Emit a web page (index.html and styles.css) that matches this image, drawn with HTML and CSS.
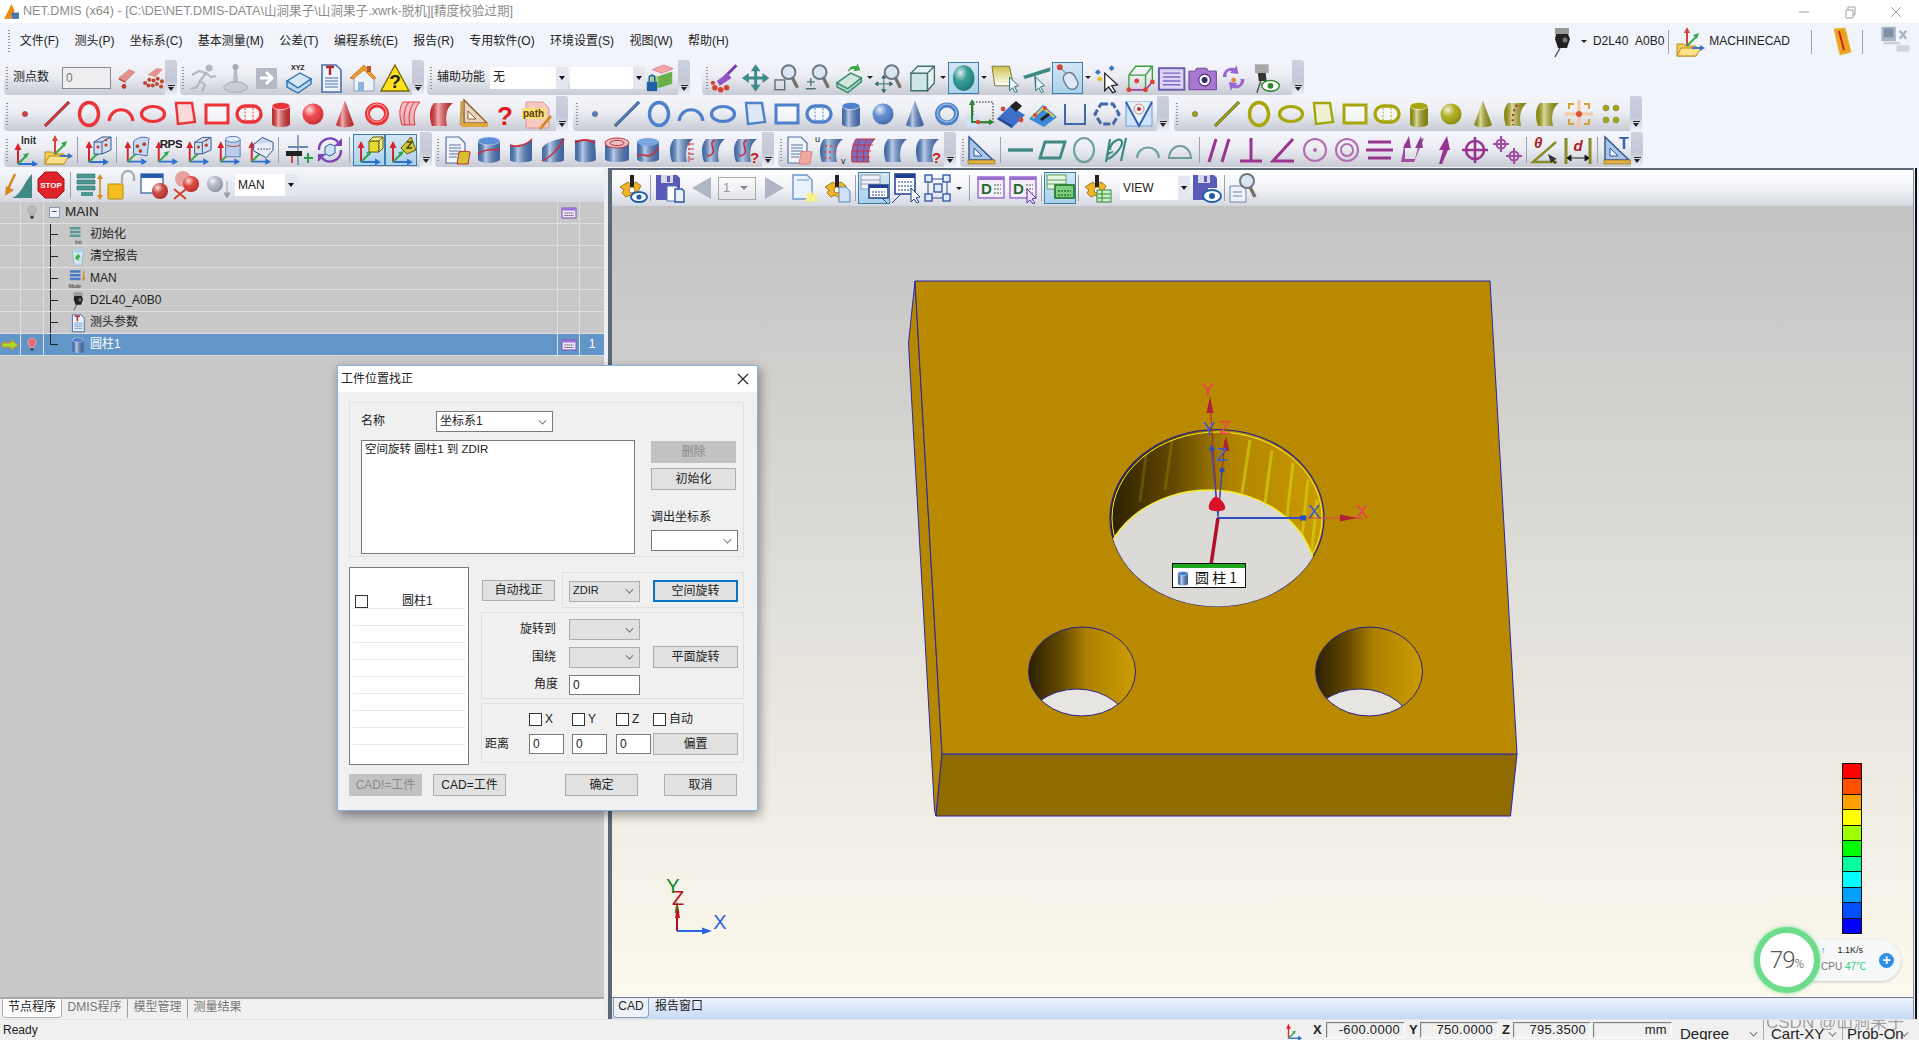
FILE: index.html
```html
<!DOCTYPE html>
<html lang="zh-CN">
<head>
<meta charset="utf-8">
<title>NET.DMIS</title>
<link rel="stylesheet" href="styles.css">
</head>
<body>
<svg class="defs" aria-hidden="true">
<defs>
<radialGradient id="gBall" cx=".35" cy=".3" r=".75"><stop offset="0" stop-color="#fff" stop-opacity=".85"/><stop offset=".45" stop-color="#fff" stop-opacity=".1"/><stop offset="1" stop-color="#000" stop-opacity=".2"/></radialGradient>
<linearGradient id="gCyl"><stop offset="0" stop-color="#000" stop-opacity=".15"/><stop offset=".35" stop-color="#fff" stop-opacity=".6"/><stop offset="1" stop-color="#000" stop-opacity=".2"/></linearGradient>
<linearGradient id="gWall"><stop offset="0" stop-color="#2c2000"/><stop offset=".3" stop-color="#634800"/><stop offset=".55" stop-color="#ad8200"/><stop offset="1" stop-color="#cc9c00"/></linearGradient>
<linearGradient id="gPage" x2="0" y2="1"><stop offset="0" stop-color="#cfc24a"/><stop offset="1" stop-color="#fff"/></linearGradient>
</defs>
<symbol id="point" viewBox="0 0 32 32"><circle cx="16" cy="16" r="2.6" fill="currentColor" stroke="#555" stroke-width=".6"/></symbol>
<symbol id="line" viewBox="0 0 32 32"><path d="M4 28 28 4" stroke="#333" stroke-width="3"/><path d="M4 28 28 4" stroke="currentColor" stroke-width="2"/></symbol>
<symbol id="circle" viewBox="0 0 32 32"><ellipse cx="16" cy="16" rx="9.5" ry="11.5" fill="none" stroke="currentColor" stroke-width="3.4"/></symbol>
<symbol id="arc" viewBox="0 0 32 32"><path d="M4 23C6 8 26 8 28 23" fill="none" stroke="currentColor" stroke-width="3.2"/></symbol>
<symbol id="ellipse" viewBox="0 0 32 32"><ellipse cx="16" cy="16" rx="11.5" ry="7.5" fill="none" stroke="currentColor" stroke-width="3.2"/></symbol>
<symbol id="plane" viewBox="0 0 32 32"><path d="M7 5h16l3 19-17 2z" fill="#fff" stroke="currentColor" stroke-width="2.4"/><path d="M7 5h16l3 19-17 2z" fill="currentColor" fill-opacity=".18"/></symbol>
<symbol id="rect" viewBox="0 0 32 32"><rect x="5" y="7" width="22" height="18" fill="#fff" fill-opacity=".6" stroke="currentColor" stroke-width="3"/></symbol>
<symbol id="slot" viewBox="0 0 32 32"><rect x="4" y="8" width="24" height="16" rx="8" fill="#fff" fill-opacity=".6" stroke="currentColor" stroke-width="3.4"/><path d="M12 10v12M20 10v12" stroke="currentColor" stroke-dasharray="2 1.5"/></symbol>
<symbol id="cyl" viewBox="0 0 32 32"><path d="M7 8v18c0 4 18 4 18 0V8z" fill="currentColor"/><path d="M7 8v18c0 4 18 4 18 0V8z" fill="url(#gCyl)"/><ellipse cx="16" cy="8" rx="9" ry="3.6" fill="currentColor" stroke="#fff" stroke-width=".6"/></symbol>
<symbol id="sphere" viewBox="0 0 32 32"><circle cx="16" cy="16" r="10.5" fill="currentColor"/><circle cx="16" cy="16" r="10.5" fill="url(#gBall)"/></symbol>
<symbol id="cone" viewBox="0 0 32 32"><path d="M16 3 7 27c4 3 14 3 18 0z" fill="currentColor"/><path d="M16 3 7 27c4 3 14 3 18 0z" fill="url(#gCyl)"/></symbol>
<symbol id="torus" viewBox="0 0 32 32"><ellipse cx="16" cy="16" rx="9.5" ry="9" fill="none" stroke="currentColor" stroke-width="5"/><ellipse cx="16" cy="15" rx="9.5" ry="9" fill="none" stroke="#fff" stroke-opacity=".6"/></symbol>
<symbol id="surfl" viewBox="0 0 32 32"><path d="M10 4h17c-6 6-7 15-5 23H9C6 18 6 10 10 4z" fill="currentColor" fill-opacity=".25" stroke="currentColor"/><path d="M16 4c-5 6-6 16-4 23M22 4c-6 6-7 16-5 23" fill="none" stroke="currentColor"/></symbol>
<symbol id="surf" viewBox="0 0 32 32"><path d="M9 5h19c-7 5-8 14-6 23H7C4 19 4 11 9 5z" fill="currentColor"/><path d="M9 5h19c-7 5-8 14-6 23H7C4 19 4 11 9 5z" fill="url(#gCyl)"/></symbol>
<symbol id="surfdot" viewBox="0 0 32 32"><use href="#surf"/><path d="M18 7c-4 5-5 14-4 20" fill="none" stroke="#b02020" stroke-dasharray="2 3" stroke-width="2"/></symbol>
<symbol id="mag" viewBox="0 0 32 32"><circle cx="17" cy="10" r="7" fill="#dbe6f2" stroke="#6d7683" stroke-width="2"/><path d="M21 16l5 10" stroke="#77716a" stroke-width="3.4"/></symbol>
<symbol id="axes" viewBox="0 0 32 32"><path d="M8 28V12" stroke="#d8232a" stroke-width="2"/><path d="M8 7l-3.5 7h7z" fill="#d8232a"/><path d="M8 28h15" stroke="#2f6fd0" stroke-width="2"/><path d="M28 28l-6-3.5v7z" fill="#2f6fd0"/><path d="M8 28l8-8" stroke="#2ea84a" stroke-width="2"/><path d="M19 17l-6 1.5 3.5 3.5z" fill="#2ea84a"/></symbol>
<symbol id="eraser" viewBox="0 0 32 32"><path d="M7 16 19 6l7 3-11 11z" fill="#e48f90" stroke="#985" stroke-width=".6"/><path d="M7 16l8 4v2l-8-4z" fill="#b44"/><circle cx="13" cy="26" r="2.8" fill="#c3352c"/></symbol>
<symbol id="eraser2" viewBox="0 0 32 32"><path d="M9 12 20 4l7 2-9 9z" fill="#e48f90"/><g fill="#bd4a30"><circle cx="6" cy="22" r="2.4"/><circle cx="11" cy="18" r="2.4"/><circle cx="16" cy="19" r="2.4"/><circle cx="21" cy="17" r="2.4"/><circle cx="26" cy="20" r="2.4"/><circle cx="10" cy="25" r="2.4"/><circle cx="15" cy="25" r="2.4"/><circle cx="20" cy="23" r="2.4"/><circle cx="25" cy="26" r="2.4"/></g></symbol>
<symbol id="runner" viewBox="0 0 32 32"><g fill="none" stroke="#b4b8c0" stroke-width="2.2"><circle cx="22" cy="6" r="2.4" fill="#b4b8c0"/><path d="M5 13 12 9l7 2-6 8 5 4-3 7M13 19l-3 6-7 2M19 11l5 4 5-1"/></g></symbol>
<symbol id="joy" viewBox="0 0 32 32"><path d="M15 6h3l1 15h-5z" fill="#b6bac2"/><circle cx="16.500" cy="5" r="3" fill="#a5a9b1"/><path d="M5 24l6-4h11l6 4v3l-6 3H11l-6-3z" fill="#c8ccd4" stroke="#a6aab2"/></symbol>
<symbol id="arrowbox" viewBox="0 0 32 32"><rect x="5" y="6" width="21" height="21" rx="1" fill="#b4b9c4"/><path d="M9 16h11m-5-6 6 6-6 6" fill="none" stroke="#fff" stroke-width="3"/></symbol>
<symbol id="xyzb" viewBox="0 0 32 32"><path d="M4 19 17 11l11 6-13 9z" fill="#d6e8f6" stroke="#2f72b0" stroke-width="1.4"/><path d="M4 19v6l11 6 13-9v-5l-13 9z" fill="#bcd9ee" stroke="#2f72b0" stroke-width="1.4"/></symbol>
<symbol id="doct" viewBox="0 0 32 32"><path d="M7 3h14l5 5v22H7z" fill="#eef3fa" stroke="#4a6fae" stroke-width="1.6"/><path d="M11 5h8M15 5v8" stroke="#b02a2a" stroke-width="2.4"/><path d="M10 16h13M10 19h13M10 22h13M10 25h13" stroke="#4a6fae"/></symbol>
<symbol id="home" viewBox="0 0 32 32"><path d="M7 15v14h20V15L17 6z" fill="#eef3fb" stroke="#8aa0c0"/><path d="M3 16 17 3l12 13-3 1-9-9-11 9z" fill="#ef9b2e" stroke="#b66a10" stroke-width=".7"/><rect x="20" y="4" width="4" height="6" fill="#b3582c"/><rect x="11" y="20" width="6" height="9" fill="#8fb2de"/></symbol>
<symbol id="warnb" viewBox="0 0 32 32"><path d="M16 3 30 29H2z" fill="#ffe01e" stroke="#776b00" stroke-width="1.4"/></symbol>
<symbol id="lockbox" viewBox="0 0 32 32"><path d="M8 7 20 2l10 4-12 5z" fill="#f3a8a0" stroke="#c06"  stroke-width=".4"/><path d="M14 14l15-5v13l-15 5z" fill="#6ab04a"/><path d="M6 13v10l8 4V14z" fill="#9ad07a"/><rect x="2" y="20" width="11" height="10" fill="#1f5fa8"/><path d="M4.500 20v-4a3 3 0 0 1 6 0v4" fill="none" stroke="#1f5fa8" stroke-width="1.6"/></symbol>
<symbol id="broom" viewBox="0 0 32 32"><path d="M28 3 15 16" stroke="#7a3ab0" stroke-width="3"/><path d="M19 11 8 19l3 5 12-8z" fill="#9454c8"/><g fill="#d6422e"><circle cx="6" cy="26" r="2.800"/><circle cx="12" cy="28" r="2.800"/><circle cx="18" cy="26" r="2.800"/><circle cx="4" cy="21" r="2.200"/></g></symbol>
<symbol id="move" viewBox="0 0 32 32"><g fill="#3e8b8b"><path d="M16 2l-5 7h10zM16 30l-5-7h10zM2 16l7-5v10zM30 16l-7-5v10z"/><rect x="14.500" y="8" width="3" height="16"/><rect x="8" y="14.500" width="16" height="3"/></g></symbol>
<symbol id="zoombox" viewBox="0 0 32 32"><use href="#mag"/><rect x="3" y="18" width="10" height="10" fill="none" stroke="#5b7070" stroke-width="1.400"/></symbol>
<symbol id="zoompm" viewBox="0 0 32 32"><use href="#mag"/><path d="M8 16v8M4 20h8M3 27h10" stroke="#4e7070" stroke-width="1.400"/></symbol>
<symbol id="zoommv" viewBox="0 0 32 32"><use href="#mag"/><path d="M9 15v14M2 22h14M9 13l-2 3h4zM9 31l-2-3h4zM0 22l3-2v4zM18 22l-3-2v4z" fill="#3b6c6c" stroke="#3b6c6c"/></symbol>
<symbol id="boxrot" viewBox="0 0 32 32"><path d="M3 21 17 11l11 5-14 11z" fill="#cfe8df" stroke="#3a8a6a" stroke-width="1.400"/><path d="M3 21v4l11 6 14-11v-4l-14 11z" fill="#a8d4c4" stroke="#3a8a6a" stroke-width="1.400"/><path d="M14 10c1-5 5-7 9-6l1-3 3 7-7 1 1-2c-3-1-5 1-7 3z" fill="#3fa83f"/></symbol>
<symbol id="cube" viewBox="0 0 32 32"><path d="M4 11h17v18H4z" fill="#cde5e3" stroke="#3f6f6f" stroke-width="1.400"/><path d="M4 11l7-7h17v17l-7 8V11zM21 11l7-7" fill="#e4f2f1" stroke="#3f6f6f" stroke-width="1.400"/></symbol>
<symbol id="tsphere" viewBox="0 0 32 32"><ellipse cx="16" cy="16" rx="11" ry="13" fill="#1f8f88"/><ellipse cx="16" cy="16" rx="11" ry="13" fill="url(#gBall)"/></symbol>
<symbol id="ypage" viewBox="0 0 32 32"><path d="M3 4h18l4 20H6z" fill="url(#gPage)" stroke="#7a7a3a"/><path d="M21 15v14l3-3 3 5 2-1-3-5 4-1z" fill="#e8f4ff" stroke="#2f6f6f"/></symbol>
<symbol id="tcur" viewBox="0 0 32 32"><path d="M2 14 30 5v4L4 17z" fill="#3e8b84"/><path d="M14 13l1 12M15 15v14l3-3 3 5 2-1-3-5 4-1z" fill="#e8f4ff" stroke="#2f6f6f"/></symbol>
<symbol id="mouse" viewBox="0 0 32 32"><circle cx="8" cy="5" r="3" fill="#d8443a"/><path d="M8 5l8 8" stroke="#666"/><rect x="13" y="10" width="12" height="18" rx="6" transform="rotate(-30 19 19)" fill="#dfe8f4" stroke="#6a7d94" stroke-width="1.400"/></symbol>
<symbol id="star" viewBox="0 0 32 32"><path d="M12 11v18l4-4 4 6 3-1-4-6 6-1z" fill="#fff" stroke="#222" stroke-width="1.300"/><path d="M8 10l-3 3-3-3 3-3zM22 6l-3 3-3-3 3-3z" fill="#3f72c4"/><path d="M10 17l-3 3-3-3 3-3z" fill="#e8c028"/></symbol>
<symbol id="redcube" viewBox="0 0 32 32"><path d="M4 13h17v15H4zM4 13l7-9h17v16l-7 8M21 13l7-9" fill="none" stroke="#3aa03a" stroke-width="1.400"/><path d="M4 28h17l7-8" stroke="#b030b0" stroke-width="1.400" fill="none"/><g fill="#d8443a"><circle cx="4" cy="28" r="2.500"/><circle cx="21" cy="28" r="2.500"/><circle cx="28" cy="20" r="2.500"/><circle cx="12" cy="19" r="2.500"/></g></symbol>
<symbol id="listb" viewBox="0 0 32 32"><rect x="3" y="6" width="26" height="22" fill="#ded6f4" stroke="#6a5bb0" stroke-width="2"/><path d="M7 11h18M7 15h18M7 19h18M7 23h18" stroke="#7a6cc8" stroke-width="1.500"/></symbol>
<symbol id="camera" viewBox="0 0 32 32"><path d="M2 9h6l2-3h10l2 3h8v19H2z" fill="#a878d0" stroke="#6d3e98"/><circle cx="18" cy="18" r="6" fill="#f8f8ff" stroke="#4b3070" stroke-width="1.200"/><circle cx="18" cy="18" r="3" fill="#3a2a60"/></symbol>
<symbol id="swap" viewBox="0 0 32 32"><path d="M5 15C5 8 11 4 17 6l2-3 2 9-9-1 2-2C10 8 8 11 9 15z" fill="#9a66d8"/><path d="M27 17c0 7-6 11-12 9l-2 3-2-9 9 1-2 2c4 1 6-2 5-6z" fill="#9a66d8"/><path d="M13 18l3-3 3 3-3 3z" fill="#e08a3a"/></symbol>
<symbol id="probee" viewBox="0 0 32 32"><rect x="5" y="2" width="14" height="9" fill="#a8a8a8"/><path d="M8 11h8l1 8H9z" fill="#333"/><path d="M11 19 7 31" stroke="#555" stroke-width="1.500"/><ellipse cx="21" cy="24" rx="9" ry="5.500" fill="#fff" stroke="#2d8a2d" stroke-width="1.500"/><circle cx="21" cy="24" r="3" fill="#2d8a2d"/></symbol>
<symbol id="probe" viewBox="0 0 32 32"><rect x="9" y="2" width="14" height="6" fill="#999"/><path d="M10 8h12l2 5-3 9H12l-3-9z" fill="#222"/><circle cx="19" cy="14" r="2.500" fill="#777"/><path d="M14 22 9 31" stroke="#555" stroke-width="1.500"/></symbol>
<symbol id="ruler" viewBox="0 0 32 32"><path d="M7 2 7 25H30z" fill="#e9d6c0" stroke="#8b5a2a" stroke-width="1.400"/><path d="M11 13v8h8z" fill="#fff" stroke="#8b5a2a"/><rect x="4" y="25" width="27" height="4" fill="#e0a83a"/><path d="M5 3 4 27" stroke="#c9a24a" stroke-width="3"/></symbol>
<symbol id="frame" viewBox="0 0 32 32"><rect x="10" y="4" width="20" height="21" fill="none" stroke="#222" stroke-dasharray="1.500 1.500"/><rect x="3" y="17" width="12" height="12" fill="#cfe0f8"/><path d="M9 24V5" stroke="#2a8a2a" stroke-width="2"/><path d="M9 1 6 7h6z" fill="#2a8a2a"/><path d="M8 24h20" stroke="#2a8a2a" stroke-width="2"/><path d="M31 24l-5-3v6z" fill="#2a8a2a"/><circle cx="15" cy="24" r="2.200" fill="#d8443a"/></symbol>
<symbol id="tool1" viewBox="0 0 32 32"><path d="M2 21 15 8l15 9-13 13z" fill="#3d6fc8"/><path d="M2 21l15 9 0-3-12-7z" fill="#2a4a90"/><path d="M15 8l6-5 6 5-6 6z" fill="#222"/><circle cx="8" cy="11" r="2.400" fill="#d8443a"/><circle cx="26" cy="22" r="2.400" fill="#d8443a"/></symbol>
<symbol id="tool2" viewBox="0 0 32 32"><path d="M2 21 16 7l14 12-13 10z" fill="#3d88d8"/><path d="M6 20 16 10l11 9" fill="none" stroke="#f0d040" stroke-width="2"/><path d="M14 22l8-6" stroke="#222" stroke-width="3"/><circle cx="8" cy="17" r="2" fill="#d8443a"/><circle cx="18" cy="10" r="2" fill="#d8443a"/></symbol>
<symbol id="squ" viewBox="0 0 32 32"><path d="M6 6v20h20V6" fill="none" stroke="#3f68a8" stroke-width="2"/></symbol>
<symbol id="dcirc" viewBox="0 0 32 32"><path d="M10 6h12l6 10-6 10H10L4 16z" fill="none" stroke="#4468a8" stroke-width="3" stroke-dasharray="7 2.500"/></symbol>
<symbol id="vee" viewBox="0 0 32 32"><rect x="3" y="4" width="26" height="24" fill="#cfe4f8" stroke="#6ca0d8"/><path d="M3 4l13 24L29 4" fill="#e8f2fb" stroke="#2f5fb0" stroke-width="2"/><circle cx="16" cy="11" r="5" fill="#f0f0f0" stroke="#c88"/><circle cx="16" cy="11" r="2" fill="#c03030"/></symbol>
<symbol id="target" viewBox="0 0 32 32"><path d="M6 11V6h5M21 6h5v5M26 21v5h-5M11 26H6v-5" fill="none" stroke="#d8a030" stroke-width="2"/><path d="M16 2v28M2 16h28" stroke="#f4c8a0" stroke-width="3"/><circle cx="16" cy="16" r="3" fill="#e0503a"/></symbol>
<symbol id="dots4" viewBox="0 0 32 32"><g fill="#a7a60a" stroke="#667"  stroke-width=".4"><circle cx="11" cy="10" r="3"/><circle cx="21" cy="10" r="3"/><circle cx="11" cy="22" r="3"/><circle cx="21" cy="22" r="3"/></g></symbol>
<symbol id="fold" viewBox="0 0 32 32"><path d="M3 18h7l2 2h10v10H3z" fill="#f7cf58" stroke="#b58a20"/><path d="M3 30l4-8h20l-5 8z" fill="#fbe28a" stroke="#b58a20"/><path d="M13 20V6" stroke="#d8443a" stroke-width="2"/><path d="M13 1l-3 6h6z" fill="#d8443a"/><path d="M13 20l9-9" stroke="#3aa84a" stroke-width="2"/><path d="M25 7l-6 2 4 4z" fill="#3aa84a"/><path d="M18 22h9" stroke="#3f72c4" stroke-width="2"/><path d="M31 22l-5-3v6z" fill="#3f72c4"/></symbol>
<symbol id="axcube" viewBox="0 0 32 32"><use href="#axes"/><path d="M13 8 21 3h9v13l-9 4H13z" fill="#d3ddf0" stroke="#36568c"/><path d="M13 8h8v12M21 8l9-5" fill="none" stroke="#36568c"/><g fill="#b8431e"><circle cx="17" cy="13" r="1.600"/><circle cx="25" cy="11" r="1.600"/><circle cx="25" cy="6" r="1.200"/></g></symbol>
<symbol id="axsurf" viewBox="0 0 32 32"><use href="#axes"/><path d="M14 7c5-5 12-5 16-3l-2 18-14-2z" fill="#c9d9f2" stroke="#4870b0"/><g fill="#b8431e"><circle cx="18" cy="12" r="1.900"/><circle cx="25" cy="10" r="1.900"/><circle cx="21" cy="17" r="1.900"/></g></symbol>
<symbol id="axcyl" viewBox="0 0 32 32"><use href="#axes"/><path d="M13 5h15v18H13z" fill="#b9cdea" stroke="#5a7ab0"/><ellipse cx="20.500" cy="5" rx="7.500" ry="3" fill="#e4eef8" stroke="#5a7ab0"/><path d="M14 11c4 2 10 2 14 0" stroke="#b84040" fill="none"/></symbol>
<symbol id="axbox" viewBox="0 0 32 32"><use href="#axes"/><path d="M10 10 19 3l11 5-7 8z" fill="#c7d8ee" stroke="#284a80"/><path d="M10 10v7l13 7 7-8V8" fill="#e8eef8" stroke="#284a80"/><path d="M14 15h13" stroke="#222" stroke-dasharray="1.500 1.500"/></symbol>
<symbol id="cross" viewBox="0 0 32 32"><path d="M16 1v30" stroke="#3a5a90"/><path d="M6 13h20" stroke="#6a8ab0" stroke-width="2"/><rect x="4" y="17" width="16" height="5" fill="#222"/><path d="M22 24h9M26 19v10" stroke="#2a9a4a" stroke-width="2"/><path d="M10 22v7" stroke="#d8443a" stroke-width="2"/></symbol>
<symbol id="cycle" viewBox="0 0 32 32"><path d="M5 16a11 11 0 0 1 19-8" fill="none" stroke="#7a45b8" stroke-width="2.400"/><path d="M28 4v8h-8z" fill="#7a45b8"/><path d="M27 16a11 11 0 0 1-19 8" fill="none" stroke="#7a45b8" stroke-width="2.400"/><path d="M4 28v-8h8z" fill="#7a45b8"/><path d="M11 13l5-3 5 2v7l-5 3-5-2z" fill="#cfe2f5" stroke="#2a5aa0"/></symbol>
<symbol id="acube" viewBox="0 0 32 32"><use href="#axes"/><path d="M16 7h10v11H16z" fill="#e6dc30" stroke="#5a5a18"/><path d="M16 7l4-4h10v11l-4 4V7zM26 7l4-4" fill="#f4ee80" stroke="#5a5a18"/></symbol>
<symbol id="az" viewBox="0 0 32 32"><use href="#axes"/><path d="M16 14 26 3l5 13-9 4z" fill="#d0c830" stroke="#5a5a18"/><path d="M22 8h5l-5 6h5" fill="none" stroke="#3a3a10" stroke-width="1.300"/></symbol>
<symbol id="docsurf" viewBox="0 0 32 32"><path d="M5 3h13l6 6v20H5z" fill="#f2f5fb" stroke="#5a6ea0" stroke-width="1.200"/><path d="M8 11h12M8 14h12M8 17h12M8 20h9M8 23h8" stroke="#5a6ea0"/></symbol>
<symbol id="docg" viewBox="0 0 32 32"><use href="#docsurf"/><path d="M18 18c4-1 8-1 11 0l-2 12H16z" fill="#d8c030" stroke="#b03030"/></symbol>
<symbol id="docp" viewBox="0 0 32 32"><use href="#docsurf"/><path d="M18 18c4-1 8-1 11 0l-2 12H16z" fill="#f0a8a0" stroke="#e08080"/></symbol>
<symbol id="c-band" viewBox="0 0 32 32"><path d="M5 7v18c0 5 22 5 22 0V7z" fill="#4f80cc"/><path d="M5 7v18c0 5 22 5 22 0V7z" fill="url(#gCyl)"/><ellipse cx="16" cy="7" rx="11" ry="4" fill="#5c8ed8" stroke="#dde"  stroke-width=".6"/><path d="M5 20c7-5 15-5 22-4" fill="none" stroke="#c83040" stroke-width="1.600"/></symbol>
<symbol id="c-open" viewBox="0 0 32 32"><path d="M5 11v15c0 3 22 3 22 0V5C22 11 11 14 5 11z" fill="#4f80cc"/><path d="M5 11v15c0 3 22 3 22 0V5C22 11 11 14 5 11z" fill="url(#gCyl)"/><path d="M5 11C11 14 22 11 27 5" fill="none" stroke="#c83040" stroke-width="1.600"/></symbol>
<symbol id="c-cut" viewBox="0 0 32 32"><path d="M5 14v12c0 3 22 3 22 0V4C22 5 8 8 5 14z" fill="#4f80cc"/><path d="M5 14v12c0 3 22 3 22 0V4C22 5 8 8 5 14z" fill="url(#gCyl)"/><path d="M5 27C13 24 22 14 27 5" fill="none" stroke="#c83040" stroke-width="1.600"/></symbol>
<symbol id="c-top" viewBox="0 0 32 32"><path d="M6 6h20l1 20c-5 3-17 3-21 0z" fill="#4f80cc"/><path d="M6 6h20l1 20c-5 3-17 3-21 0z" fill="url(#gCyl)"/><path d="M6 9c5-4 15-4 20 0" fill="none" stroke="#c83040" stroke-width="1.800"/></symbol>
<symbol id="c-ring" viewBox="0 0 32 32"><path d="M4 9v16c0 4 24 4 24 0V9z" fill="#4f80cc"/><path d="M4 9v16c0 4 24 4 24 0V9z" fill="url(#gCyl)"/><ellipse cx="16" cy="9" rx="12" ry="5" fill="#e7c0c0" stroke="#c83040"/><ellipse cx="16" cy="9" rx="7" ry="2.600" fill="none" stroke="#c83040"/></symbol>
<symbol id="c-wave" viewBox="0 0 32 32"><path d="M4 8v17c0 4 22 4 22 0V8z" fill="#4f80cc"/><path d="M4 8v17c0 4 22 4 22 0V8z" fill="url(#gCyl)"/><ellipse cx="15" cy="8" rx="11" ry="4" fill="#7aa6e0"/><path d="M4 22c7-4 8 2 14-1s6-6 8-7" fill="none" stroke="#c83040" stroke-width="1.600"/></symbol>
<symbol id="s-arrows" viewBox="0 0 32 32"><use href="#surf" class="blue"/><path d="M24 6v22" stroke="#c83040" stroke-dasharray="2 2"/><path d="M23 10h6M23 15h6M23 20h6M23 25h6" stroke="#c83040"/></symbol>
<symbol id="s-s" viewBox="0 0 32 32"><use href="#surf"/><path d="M18 6c-8 3 2 10-3 14-2 2-4 2-5 1" fill="none" stroke="#c83040" stroke-width="1.600"/></symbol>
<symbol id="s-grid" viewBox="0 0 32 32"><path d="M9 5h19c-6 5-8 14-6 23H5C4 19 5 11 9 5z" fill="#7b6ec0" stroke="#c83040"/><path d="M6 11h20M5 17h19M5 23h18M13 5c-3 8-3 15-3 23M20 5c-4 8-4 15-3 23" stroke="#c83040" fill="none"/></symbol>
<symbol id="rulerb" viewBox="0 0 32 32"><path d="M4 3v23h24z" fill="#a8c6ec" stroke="#33548c" stroke-width="1.400"/><path d="M9 14v8h8z" fill="#eef4fb" stroke="#33548c"/><rect x="3" y="26" width="27" height="4" fill="#dfb040" stroke="#8a6a20" stroke-width=".6"/></symbol>
<symbol id="t-line" viewBox="0 0 32 32"><path d="M4 16h25" stroke="#3f8a84" stroke-width="3.400"/></symbol>
<symbol id="t-para" viewBox="0 0 32 32"><path d="M9 8h20l-5 16H4z" fill="none" stroke="#3f8a84" stroke-width="2.800"/></symbol>
<symbol id="t-circ" viewBox="0 0 32 32"><ellipse cx="16" cy="16" rx="10" ry="12" fill="none" stroke="#6a9f9a" stroke-width="2"/></symbol>
<symbol id="t-cyl" viewBox="0 0 32 32"><path d="M10 5 6 28M26 4 21 27M10 16c0-8 11-14 12-8S8 28 7 24s4-6 6-6" fill="none" stroke="#3f8a84" stroke-width="2.200"/></symbol>
<symbol id="t-arc" viewBox="0 0 32 32"><path d="M5 24C6 10 26 10 27 24" fill="none" stroke="#6a9f9a" stroke-width="2"/></symbol>
<symbol id="t-half" viewBox="0 0 32 32"><path d="M5 24C6 8 26 8 27 24z" fill="none" stroke="#6a9f9a" stroke-width="2"/></symbol>
<symbol id="p-par" viewBox="0 0 32 32"><path d="M13 5 6 28M26 5l-7 23" stroke="#9a3490" stroke-width="3" fill="none"/></symbol>
<symbol id="p-perp" viewBox="0 0 32 32"><path d="M16 4v23M5 27h22" stroke="#9a3490" stroke-width="3" fill="none"/></symbol>
<symbol id="p-ang" viewBox="0 0 32 32"><path d="M26 5 6 27h21" stroke="#9a3490" stroke-width="3" fill="none"/></symbol>
<symbol id="p-dot" viewBox="0 0 32 32"><circle cx="16" cy="16" r="11" fill="none" stroke="#b46cb0" stroke-width="2"/><circle cx="16" cy="16" r="2" fill="#b46cb0"/></symbol>
<symbol id="p-con" viewBox="0 0 32 32"><circle cx="16" cy="16" r="11" fill="none" stroke="#b46cb0" stroke-width="2"/><circle cx="16" cy="16" r="6" fill="none" stroke="#b46cb0" stroke-width="2"/></symbol>
<symbol id="p-eq" viewBox="0 0 32 32"><path d="M5 8h23M3 16h27M5 24h23" stroke="#9a3490" stroke-width="3"/></symbol>
<symbol id="p-ar2" viewBox="0 0 32 32"><path d="M10 8l-4 20h13L29 4l-4 2-5 19H10z" fill="#a04aa0"/><path d="M14 2 8 14h8zM26 2l-6 12h8z" fill="#8e3a90"/></symbol>
<symbol id="p-ar1" viewBox="0 0 32 32"><path d="M20 2 12 16h4l-4 14h3l6-14h2z" fill="#9a3490"/></symbol>
<symbol id="p-tgt" viewBox="0 0 32 32"><circle cx="16" cy="16" r="9" fill="none" stroke="#9a3490" stroke-width="2.600"/><path d="M16 3v26M3 16h26" stroke="#9a3490" stroke-width="2.600"/></symbol>
<symbol id="p-tg2" viewBox="0 0 32 32"><g fill="none" stroke="#a04aa0" stroke-width="2"><circle cx="10" cy="10" r="4.500"/><path d="M10 2v16M2 10h16"/><circle cx="23" cy="22" r="4.500"/><path d="M23 14v16M15 22h16"/></g></symbol>
<symbol id="thetab" viewBox="0 0 32 32"><path d="M26 8 3 28h24" fill="none" stroke="#8a8a28" stroke-width="2.400"/><path d="M18 20l3 9 2-2 2 3 1-1-2-3 3-1z" fill="#333"/></symbol>
<symbol id="dimb" viewBox="0 0 32 32"><path d="M4 4v26M28 4v26" stroke="#8a8a28" stroke-width="3"/><path d="M7 24h18M5 24l4-3v6zM27 24l-4-3v6z" stroke="#222"/></symbol>
<symbol id="curve" viewBox="0 0 32 32"><path d="M9 29c10-4 12-16 20-24v24z" fill="#3f8a84"/><path d="M12 5 5 20" stroke="#d8891a" stroke-width="2.400"/><path d="M2 27 3 17l8 4z" fill="#d8891a"/></symbol>
<symbol id="stopb" viewBox="0 0 32 32"><path d="M10 3h12l7 7v12l-7 7H10l-7-7V10z" fill="#e0222a" stroke="#a01818"/></symbol>
<symbol id="lsort" viewBox="0 0 32 32"><path d="M3 5h18v4H3zM3 11h18v4H3zM3 17h18v4H3z" fill="#4a9a94" stroke="#2d6a66" stroke-width=".6"/><path d="M7 23h12v4H7z" fill="#4a9a94"/><path d="M26 8v21" stroke="#d8891a" stroke-width="1.600"/><path d="M26 5l-3 5h6zM26 31l-3-5h6z" fill="#d8891a"/></symbol>
<symbol id="lock" viewBox="0 0 32 32"><rect x="2" y="15" width="15" height="15" rx="1" fill="#f4c020" stroke="#b08810"/><path d="M16 15V8a6 6 0 0 1 12 0v4" fill="none" stroke="#aab0b8" stroke-width="2.400"/></symbol>
<symbol id="wball" viewBox="0 0 32 32"><rect x="3" y="5" width="22" height="19" fill="#fff" stroke="#4a6ea8" stroke-width="1.400"/><rect x="3" y="5" width="22" height="4" fill="#2a5aa8"/><circle cx="22" cy="22" r="8" fill="#c8342c"/><circle cx="22" cy="22" r="8" fill="url(#gBall)"/></symbol>
<symbol id="ballx" viewBox="0 0 32 32"><circle cx="13" cy="10" r="8" fill="#e8a0a0"/><circle cx="21" cy="15" r="8" fill="#d8342c"/><circle cx="21" cy="15" r="8" fill="url(#gBall)"/><path d="M4 20l12 10M16 20 4 30" stroke="#d84030" stroke-width="2"/></symbol>
<symbol id="balld" viewBox="0 0 32 32"><circle cx="13" cy="15" r="8" fill="#a8aec0"/><circle cx="13" cy="15" r="8" fill="url(#gBall)"/><path d="M25 12v14M25 29l-3-5h6z" fill="#9aa0a8" stroke="#9aa0a8"/></symbol>
<symbol id="bulb" viewBox="0 0 32 32"><path d="M16 5c-5 0-7 4-6 8 1 3 3 4 3 7h6c0-3 2-4 3-7 1-4-1-8-6-8z" fill="#bbb" stroke="#999"/><rect x="13.500" y="21" width="5" height="4" fill="#333"/></symbol>
<symbol id="bulbr" viewBox="0 0 32 32"><path d="M16 5c-5 0-7 4-6 8 1 3 3 4 3 7h6c0-3 2-4 3-7 1-4-1-8-6-8z" fill="#e86a70" stroke="#fbb"/><rect x="13.500" y="21" width="5" height="4" fill="#444"/></symbol>
<symbol id="cal" viewBox="0 0 32 32"><rect x="2" y="6" width="28" height="20" fill="#efe6fb" stroke="#7a4ac0" stroke-width="2"/><rect x="2" y="6" width="28" height="5" fill="#9a70d8"/><path d="M7 16h18M7 21h18" stroke="#444" stroke-width="2" stroke-dasharray="2.500 1.500"/></symbol>
<symbol id="recyc" viewBox="0 0 32 32"><path d="M7 6h18l-3 23H10z" fill="#cfe8ee" stroke="#7aa8c0"/><ellipse cx="16" cy="6" rx="9" ry="3" fill="#a9d6e4"/><path d="M12 15l5-4 3 5-3 2 1 4-6-3z" fill="#3fae4a"/></symbol>
<symbol id="linitb" viewBox="0 0 32 32"><path d="M3 3h17v4H3zM3 9h17v4H3zM3 15h17v4H3z" fill="#5a9a94"/></symbol>
<symbol id="lmodeb" viewBox="0 0 32 32"><path d="M3 2h17v4H3zM3 8h17v4H3zM3 14h17v4H3z" fill="#4a78c8"/><path d="M25 3v13" stroke="#d8891a" stroke-width="2"/><path d="M25 19l-3-5h6z" fill="#d8891a"/></symbol>
<symbol id="pencil" viewBox="0 0 32 32"><path d="M10 3 21 2l6 24-11 3z" fill="#f0a020" stroke="#e0c040"/><path d="M15 5l5 19" stroke="#c02020" stroke-width="1.800"/></symbol>
<symbol id="pcx" viewBox="0 0 40 40"><rect x="3" y="1" width="18" height="18" fill="#aab6c4"/><rect x="6" y="3" width="12" height="11" fill="#7e90a8"/><path d="M6 20h20v3H6z" fill="#c8d0da"/><path d="M22 24h16v8H22z" fill="#cfd5dc"/><path d="M26 6l8 10M34 6 26 16" stroke="#a8b4c0" stroke-width="3"/></symbol>
<symbol id="gear" viewBox="0 0 32 32"><path d="M4 15l8-5 3 3 5-3 5 4-3 5 2 4-6 3-4-3-4 2-4-4 2-3z" fill="#f0b428" stroke="#a8781c"/><path d="M14 3h4v14h-4z" fill="#222"/><circle cx="16" cy="18" r="3" fill="#fff" stroke="#a8781c"/></symbol>
<symbol id="geare" viewBox="0 0 32 32"><use href="#gear"/><ellipse cx="23" cy="25" rx="8" ry="5" fill="#fff" stroke="#1f5fa8" stroke-width="2"/><circle cx="23" cy="25" r="2.600" fill="#1f5fa8"/></symbol>
<symbol id="geard" viewBox="0 0 32 32"><use href="#gear"/><path d="M18 15h7l4 4v11H18z" fill="#cfe0f6" stroke="#5c84b8"/></symbol>
<symbol id="geart" viewBox="0 0 32 32"><use href="#gear"/><rect x="16" y="18" width="14" height="12" fill="#cfeecd" stroke="#2a8a2a"/><path d="M17 22h12M17 26h12M21 18v12" stroke="#2a8a2a"/></symbol>
<symbol id="save" viewBox="0 0 32 32"><path d="M3 3h21l3 3v10H18v12H3z" fill="#5a5ab8"/><rect x="8" y="3" width="12" height="8" fill="#d8d8e8"/><rect x="14" y="4" width="3" height="6" fill="#5a5ab8"/></symbol>
<symbol id="savedoc" viewBox="0 0 32 32"><use href="#save"/><path d="M14 14h9l3 3v12H14z" fill="#fff" stroke="#4a72b0"/><path d="M22 17h7l2 2v11h-9z" fill="#e8f2fb" stroke="#2a52a8" stroke-width="1.400"/></symbol>
<symbol id="saveeye" viewBox="0 0 32 32"><use href="#save"/><ellipse cx="22" cy="24" rx="9" ry="6" fill="#fff" stroke="#1f5fa8" stroke-width="2"/><circle cx="22" cy="24" r="3" fill="#1f5fa8"/></symbol>
<symbol id="newd" viewBox="0 0 32 32"><path d="M4 3h14l5 5v19H4z" fill="#e8f2fb" stroke="#6d94c8" stroke-width="1.400"/><path d="M8 8h12" stroke="#6d94c8"/><path d="M22 18l2 5 5-2-3 5 4 3-6 0-2 3-2-3-5 0 4-4-3-4 5 1z" fill="#f8f088"/></symbol>
<symbol id="tbla" viewBox="0 0 32 32"><rect x="3" y="3" width="19" height="14" fill="#f0f0f8" stroke="#909cb0"/><path d="M3 8h19M3 12h19" stroke="#909cb0"/><rect x="11" y="13" width="19" height="13" fill="#fff" stroke="#203f90" stroke-width="1.500"/><rect x="11" y="13" width="19" height="3" fill="#203f90"/><path d="M14 20h13M14 23h13" stroke="#203f90" stroke-dasharray="2 1"/><path d="M24 26l5 5" stroke="#203f90"/></symbol>
<symbol id="tblc" viewBox="0 0 32 32"><rect x="5" y="2" width="20" height="20" fill="#fff" stroke="#203f90" stroke-width="1.500"/><rect x="5" y="2" width="20" height="4" fill="#203f90"/><path d="M8 10h14M8 14h14M8 18h14" stroke="#203f90" stroke-dasharray="2 1"/><path d="M2 31 10 23" stroke="#203f90"/><path d="M21 16v14l3-3 3 4 2-1-3-4 4-1z" fill="#fff" stroke="#203f90"/></symbol>
<symbol id="net" viewBox="0 0 32 32"><g fill="#dcebfa" stroke="#2a4fa0" stroke-width="1.300"><rect x="3" y="3" width="7" height="7"/><rect x="21" y="3" width="7" height="7"/><rect x="3" y="22" width="7" height="7"/><rect x="21" y="22" width="7" height="7"/><rect x="12" y="12" width="8" height="8"/></g><path d="M10 7h11M6 10v12M25 10v12M10 26h11" stroke="#2a4fa0"/></symbol>
<symbol id="diib" viewBox="0 0 32 32"><rect x="3" y="5" width="26" height="21" fill="#f4eefc" stroke="#9a6ed0" stroke-width="1.500"/><rect x="3" y="5" width="26" height="3" fill="#9a6ed0"/><path d="M19 13h7M19 17h7M19 21h7" stroke="#3a6a30" stroke-dasharray="2 1"/></symbol>
<symbol id="tblg" viewBox="0 0 32 32"><rect x="3" y="3" width="19" height="14" fill="#e4f4e0" stroke="#5aa05a"/><path d="M3 8h19M3 12h19" stroke="#5aa05a"/><rect x="11" y="13" width="19" height="13" fill="#7ed07e" stroke="#1a6a1a" stroke-width="1.500"/><path d="M14 19h13M14 23h13" stroke="#0a400a" stroke-dasharray="2 1"/></symbol>
<symbol id="zdoc" viewBox="0 0 32 32"><path d="M3 14h12l4 4v12H3z" fill="#eef3fb" stroke="#6d84a8"/><path d="M6 20h9M6 24h9" stroke="#6d84a8"/><circle cx="20" cy="9" r="7" fill="#dbe6f2" stroke="#6d7683" stroke-width="2"/><path d="M23 15l5 10" stroke="#77716a" stroke-width="3.400"/></symbol>
</svg>

<div class="app">
  <header class="titlebar">
    <svg class="applogo" viewBox="0 0 16 16"><path d="M1 15 8 1l3 6-4 8z" fill="#e8901a"/><path d="M8 9h7v6H8z" fill="#4a78a8"/></svg>
    <span class="title">NET.DMIS (x64) - [C:\DE\NET.DMIS-DATA\山涧果子\山涧果子.xwrk-脱机][精度校验过期]</span>
    <span class="winbtns">
      <svg class="winbtn" viewBox="0 0 46 20"><path d="M18 10h10" stroke="#a0a0a0"/></svg>
      <svg class="winbtn" viewBox="0 0 46 20"><path d="M19 8h7v8h-7zM21 8V5h7v8h-2" fill="none" stroke="#a0a0a0"/></svg>
      <svg class="winbtn" viewBox="0 0 46 20"><path d="M18 5l10 10M28 5 18 15" stroke="#a0a0a0"/></svg>
    </span>
  </header>

  <nav class="menubar">
    <span class="grip gripm"></span>
    <span class="mi">文件(F)</span><span class="mi">测头(P)</span><span class="mi">坐标系(C)</span><span class="mi">基本测量(M)</span><span class="mi">公差(T)</span><span class="mi">编程系统(E)</span><span class="mi">报告(R)</span><span class="mi">专用软件(O)</span><span class="mi">环境设置(S)</span><span class="mi">视图(W)</span><span class="mi">帮助(H)</span>
    <span class="menuright">
      <svg class="i"><use href="#probe"/></svg><span class="caret caretm"></span>
      <span class="mtxt">D2L40&nbsp;&nbsp;A0B0</span><span class="msep"></span>
      <svg class="i ml2"><use href="#fold"/></svg><span class="mtxt mtxt2">MACHINECAD</span><span class="msep msep2"></span>
      <svg class="i ml8"><use href="#pencil"/></svg><span class="msep msep3"></span>
      <svg class="i pc" viewBox="0 0 40 40"><use href="#pcx"/></svg>
    </span>
  </nav>

  <div class="tbrow">
    <div class="band w1a"><span class="grip"></span><span class="lbl l1">测点数</span><input class="numin" value="0" readonly><svg class="i n"><use href="#eraser"/></svg><svg class="i n"><use href="#eraser2"/></svg></div><div class="handle"></div>
    <div class="band w1b gap3"><span class="grip"></span><span class="pad2"></span><svg class="i"><use href="#runner"/></svg><svg class="i"><use href="#joy"/></svg><svg class="i"><use href="#arrowbox"/></svg><svg class="i" viewBox="0 0 32 32"><use href="#xyzb"/><text x="8" y="8" class="svgt">XYZ</text></svg><svg class="i"><use href="#doct"/></svg><svg class="i"><use href="#home"/></svg><svg class="i" viewBox="0 0 32 32"><use href="#warnb"/><text x="16" y="26" class="svgw">?</text></svg></div><div class="handle"></div>
    <div class="band w1c gap3"><span class="grip"></span><span class="lbl l2">辅助功能</span><span class="cb cb1"><span class="cbt">无</span><span class="cbbtn"></span></span><span class="cb cb2"><span class="cbt"></span><span class="cbbtn"></span></span><svg class="i n2"><use href="#lockbox"/></svg></div><div class="handle"></div>
    <div class="band w1d gap12"><span class="grip"></span><svg class="i r"><use href="#broom"/></svg><svg class="i r"><use href="#move"/></svg><svg class="i r"><use href="#zoombox"/></svg><svg class="i r"><use href="#zoompm"/></svg><svg class="i r"><use href="#boxrot"/></svg><span class="caret"></span><svg class="i r"><use href="#zoommv"/></svg><svg class="i r"><use href="#cube"/></svg><span class="caret"></span><svg class="i r act"><use href="#tsphere"/></svg><span class="caret"></span><svg class="i r"><use href="#ypage"/></svg><svg class="i r"><use href="#tcur"/></svg><svg class="i r act"><use href="#mouse"/></svg><span class="caret"></span><svg class="i r"><use href="#star"/></svg><svg class="i r"><use href="#redcube"/></svg><svg class="i r"><use href="#listb"/></svg><svg class="i r"><use href="#camera"/></svg><svg class="i r"><use href="#swap"/></svg><svg class="i r"><use href="#probee"/></svg></div><div class="handle"></div>
  </div>

  <div class="tbrow">
    <div class="band w2a red"><span class="grip"></span><svg class="i"><use href="#point"/></svg><svg class="i"><use href="#line"/></svg><svg class="i"><use href="#circle"/></svg><svg class="i"><use href="#arc"/></svg><svg class="i"><use href="#ellipse"/></svg><svg class="i"><use href="#plane"/></svg><svg class="i"><use href="#rect"/></svg><svg class="i"><use href="#slot"/></svg><svg class="i"><use href="#cyl"/></svg><svg class="i"><use href="#sphere"/></svg><svg class="i"><use href="#cone"/></svg><svg class="i"><use href="#torus"/></svg><svg class="i"><use href="#surfl"/></svg><svg class="i"><use href="#surf"/></svg><svg class="i"><use href="#ruler"/></svg><svg class="i" viewBox="0 0 32 32"><text x="16" y="27" class="svgr">?</text></svg><svg class="i" viewBox="0 0 32 32"><path d="M5 4h17l6 6v20H5z" fill="#f8c8c0" stroke="#d99"/><rect x="1" y="10" width="24" height="11" fill="#f4e27a"/><text x="2" y="19" class="svgp">path</text><path d="M18 30 29 17l2 2-11 13z" fill="#d08a2a"/></svg></div><div class="handle"></div>
    <div class="band w2b gap5 blue"><span class="grip"></span><svg class="i"><use href="#point"/></svg><svg class="i"><use href="#line"/></svg><svg class="i"><use href="#circle"/></svg><svg class="i"><use href="#arc"/></svg><svg class="i"><use href="#ellipse"/></svg><svg class="i"><use href="#plane"/></svg><svg class="i"><use href="#rect"/></svg><svg class="i"><use href="#slot"/></svg><svg class="i"><use href="#cyl"/></svg><svg class="i"><use href="#sphere"/></svg><svg class="i"><use href="#cone"/></svg><svg class="i"><use href="#torus"/></svg><svg class="i"><use href="#frame"/></svg><svg class="i"><use href="#tool1"/></svg><svg class="i"><use href="#tool2"/></svg><svg class="i"><use href="#squ"/></svg><svg class="i"><use href="#dcirc"/></svg><svg class="i"><use href="#vee"/></svg></div><div class="handle"></div>
    <div class="band w2c gap5 yel"><span class="grip"></span><svg class="i"><use href="#point"/></svg><svg class="i"><use href="#line"/></svg><svg class="i"><use href="#circle"/></svg><svg class="i"><use href="#ellipse"/></svg><svg class="i"><use href="#plane"/></svg><svg class="i"><use href="#rect"/></svg><svg class="i"><use href="#slot"/></svg><svg class="i"><use href="#cyl"/></svg><svg class="i"><use href="#sphere"/></svg><svg class="i"><use href="#cone"/></svg><svg class="i"><use href="#surfdot"/></svg><svg class="i"><use href="#surf"/></svg><svg class="i"><use href="#target"/></svg><svg class="i"><use href="#dots4"/></svg></div><div class="handle"></div>
  </div>

  <div class="tbrow">
    <div class="band w3a"><span class="grip"></span><span class="pad1"></span><svg class="i" viewBox="0 0 32 32"><use href="#axes" y="2"/><text x="11" y="10" class="svgb">Init</text></svg><svg class="i"><use href="#fold"/></svg><span class="sep"></span><svg class="i"><use href="#axcube"/></svg><span class="sep"></span><svg class="i t"><use href="#axsurf"/></svg><svg class="i t" viewBox="0 0 32 32"><use href="#axes"/><text x="9" y="14" class="svgs">RPS</text></svg><svg class="i t"><use href="#axcube"/></svg><svg class="i t"><use href="#axcyl"/></svg><svg class="i t"><use href="#axbox"/></svg><span class="sep"></span><svg class="i"><use href="#cross"/></svg><svg class="i"><use href="#cycle"/></svg><span class="sep"></span><svg class="i act"><use href="#acube"/></svg><svg class="i act"><use href="#az"/></svg></div><div class="handle"></div>
    <div class="band w3b gap3 blue"><span class="grip"></span><span class="pad1"></span><svg class="i"><use href="#docg"/></svg><svg class="i"><use href="#c-band"/></svg><svg class="i"><use href="#c-open"/></svg><svg class="i"><use href="#c-cut"/></svg><svg class="i"><use href="#c-top"/></svg><svg class="i"><use href="#c-ring"/></svg><svg class="i"><use href="#c-wave"/></svg><svg class="i"><use href="#s-arrows"/></svg><svg class="i"><use href="#s-s"/></svg><svg class="i" viewBox="0 0 32 32"><use href="#s-s"/><text x="21" y="29" class="svgq">?</text></svg></div><div class="handle"></div>
    <div class="band w3c gap4 blue"><span class="grip"></span><svg class="i"><use href="#docp"/></svg><svg class="i" viewBox="0 0 32 32"><use href="#surf"/><text x="0" y="8" class="svgu">u</text><text x="26" y="30" class="svgu">v</text><g fill="#e04030"><circle cx="11" cy="12" r="1"/><circle cx="16" cy="12" r="1"/><circle cx="21" cy="12" r="1"/><circle cx="10" cy="18" r="1"/><circle cx="15" cy="18" r="1"/><circle cx="20" cy="18" r="1"/><circle cx="10" cy="24" r="1"/><circle cx="15" cy="24" r="1"/></g></svg><svg class="i"><use href="#s-grid"/></svg><svg class="i"><use href="#surf"/></svg><svg class="i" viewBox="0 0 32 32"><use href="#surf"/><text x="21" y="29" class="svgq">?</text></svg></div><div class="handle"></div>
    <div class="band w3d gap4"><span class="grip"></span><svg class="i"><use href="#rulerb"/></svg><span class="sep"></span><svg class="i"><use href="#t-line"/></svg><svg class="i"><use href="#t-para"/></svg><svg class="i"><use href="#t-circ"/></svg><svg class="i"><use href="#t-cyl"/></svg><svg class="i"><use href="#t-arc"/></svg><svg class="i"><use href="#t-half"/></svg><span class="sep"></span><svg class="i"><use href="#p-par"/></svg><svg class="i"><use href="#p-perp"/></svg><svg class="i"><use href="#p-ang"/></svg><svg class="i"><use href="#p-dot"/></svg><svg class="i"><use href="#p-con"/></svg><svg class="i"><use href="#p-eq"/></svg><svg class="i"><use href="#p-ar2"/></svg><svg class="i"><use href="#p-ar1"/></svg><svg class="i"><use href="#p-tgt"/></svg><svg class="i"><use href="#p-tg2"/></svg><span class="sep"></span><svg class="i" viewBox="0 0 32 32"><use href="#thetab"/><text x="4" y="14" class="svgth">θ</text></svg><svg class="i" viewBox="0 0 32 32"><use href="#dimb"/><text x="16" y="17" class="svgth svgmid">d</text></svg><span class="sep"></span><svg class="i" viewBox="0 0 32 32"><use href="#rulerb"/><text x="18" y="15" class="svgtb">T</text></svg></div><div class="handle"></div>
  </div>

  <main class="work">
    <section class="left">
      <div class="ltool">
        <svg class="i"><use href="#curve"/></svg><svg class="i" viewBox="0 0 32 32"><use href="#stopb"/><text x="16" y="19" class="svgst svgmid">STOP</text></svg><span class="sep"></span><svg class="i"><use href="#lsort"/></svg><svg class="i"><use href="#lock"/></svg><svg class="i"><use href="#wball"/></svg><svg class="i"><use href="#ballx"/></svg><svg class="i"><use href="#balld"/></svg>
        <span class="cb cb3"><span class="cbt">MAN</span><span class="cbbtn"></span></span>
      </div>
      <div class="tree">
        <div class="row"><span class="c1"></span><span class="c2"><svg class="bulb"><use href="#bulb"/></svg></span><span class="c3"><span class="exp">−</span><span class="rootl">MAIN</span></span><span class="c4"><svg class="cal"><use href="#cal"/></svg></span><span class="c5"></span></div>
        <div class="row"><span class="c1"></span><span class="c2"></span><span class="c3"><span class="conn"></span><svg class="ti" viewBox="0 0 32 32"><use href="#linitb"/><text x="11" y="30" class="svgi">Init</text></svg>初始化</span><span class="c4"></span><span class="c5"></span></div>
        <div class="row"><span class="c1"></span><span class="c2"></span><span class="c3"><span class="conn"></span><svg class="ti"><use href="#recyc"/></svg>清空报告</span><span class="c4"></span><span class="c5"></span></div>
        <div class="row"><span class="c1"></span><span class="c2"></span><span class="c3"><span class="conn"></span><svg class="ti" viewBox="0 0 32 32"><use href="#lmodeb"/><text x="1" y="30" class="svgi">Mode</text></svg>MAN</span><span class="c4"></span><span class="c5"></span></div>
        <div class="row"><span class="c1"></span><span class="c2"></span><span class="c3"><span class="conn"></span><svg class="ti"><use href="#probe"/></svg>D2L40_A0B0</span><span class="c4"></span><span class="c5"></span></div>
        <div class="row"><span class="c1"></span><span class="c2"></span><span class="c3"><span class="conn"></span><svg class="ti"><use href="#doct"/></svg>测头参数</span><span class="c4"></span><span class="c5"></span></div>
        <div class="row sel"><span class="c1"><svg class="arrow" viewBox="0 0 18 12"><path d="M1 4h9V1l7 5-7 5V8H1z" fill="#9fe02a" stroke="#e08a10"/></svg></span><span class="c2"><svg class="bulb"><use href="#bulbr"/></svg></span><span class="c3"><span class="conn last"></span><svg class="ti blue"><use href="#cyl"/></svg>圆柱1</span><span class="c4"><svg class="cal"><use href="#cal"/></svg></span><span class="c5">1</span></div>
      </div>
      <div class="ltabs"><span class="ltab on">节点程序</span><span class="ltab">DMIS程序</span><span class="ltab div">模型管理</span><span class="ltab div">测量结果</span></div>
    </section>
    <section class="right">
      <div class="ptool">
        <svg class="i p"><use href="#geare"/></svg><span class="sep"></span><svg class="i p"><use href="#savedoc"/></svg>
        <svg class="i p" viewBox="0 0 32 32"><path d="M26 5v22L7 16z" fill="#b0b6c4"/></svg>
        <span class="pageb">1<span class="pcar"></span></span>
        <svg class="i p" viewBox="0 0 32 32"><path d="M8 5v22l19-11z" fill="#b0b6c4"/></svg>
        <svg class="i p"><use href="#newd"/></svg><svg class="i p"><use href="#geard"/></svg><span class="sep"></span>
        <svg class="i p act"><use href="#tbla"/></svg><svg class="i p"><use href="#tblc"/></svg><svg class="i p"><use href="#net"/></svg><span class="caret"></span><span class="sep sepw"></span>
        <svg class="i p" viewBox="0 0 32 32"><use href="#diib"/><text x="6" y="22" class="svgd">D</text></svg><svg class="i p" viewBox="0 0 32 32"><use href="#diib"/><text x="6" y="22" class="svgd">D</text><path d="M20 17v14l3-3 3 4 2-1-3-4 4-1z" fill="#f0e0ff" stroke="#6030a0"/></svg><span class="sep"></span>
        <svg class="i p act"><use href="#tblg"/></svg><span class="sep"></span><svg class="i p"><use href="#geart"/></svg>
        <span class="cb cb4"><span class="cbt">VIEW</span><span class="cbbtn"></span></span>
        <svg class="i p"><use href="#saveeye"/></svg><span class="sep"></span><svg class="i p"><use href="#zdoc"/></svg>
      </div>
      <div class="viewport">
        <svg class="scene" viewBox="612 206 1301 789">
          <defs>
            <clipPath id="h1"><ellipse cx="1217" cy="518" rx="107" ry="88.500"/></clipPath>
            <clipPath id="h2"><ellipse cx="1082" cy="671.500" rx="53.500" ry="44.500"/></clipPath>
            <clipPath id="h3"><ellipse cx="1369" cy="671.500" rx="53.500" ry="44.500"/></clipPath>
          </defs>
          <path d="M915 281 908.500 343 934.500 810 936 816 942 754z" fill="#b68700" stroke="#2727a8"/>
          <path d="M942 754H1517L1510.500 816H936z" fill="#8f6b00" stroke="#2727a8"/>
          <path d="M915 281H1490L1517 754H942z" fill="#b98a00" stroke="#2727a8"/>
          <ellipse cx="1217" cy="518" rx="107" ry="88.500" fill="url(#gWall)" stroke="#2a1f8a" stroke-width="1.200"/>
          <g clip-path="url(#h1)">
            <g class="stripes"><path class="faint" d="M1172 441 1165 490M1146 455 1140 502"/><path d="M1250 440 1242 493M1272 450 1265 503M1293 463 1287 517M1308 480 1302 537M1317 500 1311 557"/></g>
            <ellipse cx="1217" cy="518" rx="105" ry="86" class="yring"/>
            <ellipse cx="1209" cy="579" rx="107" ry="89" fill="#dcdad6" class="yring2"/>
          </g>
          <g clip-path="url(#h2)"><ellipse cx="1082" cy="671.500" rx="53.500" ry="44.500" fill="url(#gWall)"/><ellipse cx="1077" cy="733" rx="54" ry="44" fill="#e6e5e2" stroke="#2a1f8a"/></g>
          <ellipse cx="1082" cy="671.500" rx="53.500" ry="44.500" fill="none" stroke="#2a1f8a"/>
          <g clip-path="url(#h3)"><ellipse cx="1369" cy="671.500" rx="53.500" ry="44.500" fill="url(#gWall)"/><ellipse cx="1360" cy="733" rx="54" ry="44" fill="#e6e5e2" stroke="#2a1f8a"/></g>
          <ellipse cx="1369" cy="671.500" rx="53.500" ry="44.500" fill="none" stroke="#2a1f8a"/>
          <path d="M1218 518 1211 565" stroke="#b0102a" stroke-width="3.500"/>
          <path d="M1217 505 1210.500 410M1219 505 1225 440" stroke="#b0203a" stroke-width="1"/>
          <path d="M1210 396l-3.500 17h7zM1226 436l-3.500 15h7z" fill="#b0203a"/>
          <path d="M1218 518 1211 445M1218 518 1222 470" stroke="#2f4fc0" stroke-width="1.200"/>
          <circle cx="1212" cy="449" r="2.500" fill="#2a4abf"/><circle cx="1222" cy="470" r="2.500" fill="#2a4abf"/>
          <path d="M1218 518h145" stroke="#e0405a" stroke-width="1"/>
          <path d="M1218 518h88" stroke="#2f4fc0" stroke-width="2"/>
          <path d="M1357 518l-17-3.500v7z" fill="#b0203a"/><rect x="1300" y="515.500" width="6" height="5" fill="#2a4abf"/>
          <path d="M1216 496c-6 4-8 9-7 13 2 3 14 3 16 0 1-4-3-9-9-13z" fill="#d8102a"/>
          <text x="1208" y="396" class="axl ar">Y</text><text x="1225" y="434" class="axl ar">Z</text><text x="1362" y="518" class="axl ar">X</text>
          <text x="1209" y="435" class="axl ab">Y</text><text x="1222" y="461" class="axl ab">Z</text><text x="1314" y="518" class="axl ab">X</text>
          <rect x="1172.500" y="563.500" width="73" height="24" fill="#fff" stroke="#111"/><rect x="1173" y="564" width="72" height="4" fill="#1fa81f"/>
          <svg x="1174" y="569" width="18" height="18" class="blue"><use href="#cyl"/></svg>
          <text x="1195" y="583" class="tag">圆 柱 1</text>
          <path d="M677 931V905" stroke="#b0102a" stroke-width="2"/><path d="M677 901l-2.500 12h5z" fill="#2a8a2a"/><path d="M677.500 905l-2.500 13h5z" fill="#c81020"/>
          <path d="M677 931h30" stroke="#2a64e0" stroke-width="2"/><path d="M712 931l-10-3.500v7z" fill="#2a64e0"/>
          <text x="673" y="893" class="tri tg">Y</text><text x="678" y="905" class="tri tr">Z</text><text x="720" y="929" class="tri tb">X</text>
        </svg>
        <div class="scale"><i class="s1"></i><i class="s2"></i><i class="s3"></i><i class="s4"></i><i class="s5"></i><i class="s6"></i><i class="s7"></i><i class="s8"></i><i class="s9"></i><i class="s10"></i><i class="s11"></i></div>
        <div class="widget">
          <div class="wpill"><div class="wl1"><span class="warr">↑</span><span>1.1K/s</span></div><div class="wl2">CPU <span class="wt">47℃</span></div><span class="wplus">+</span></div>
          <div class="wring"><span class="wnum">79</span><span class="wpct">%</span></div>
        </div>
      </div>
      <div class="rtabs"><span class="rtab on">CAD</span><span class="rtab">报告窗口</span></div>
    </section>
    <span class="blackbar"></span>
  </main>

  <footer class="status">
    <span class="ready">Ready</span>
    <svg class="sax"><use href="#axes"/></svg>
    <b class="al ax">X</b><span class="fld f1">-600.0000</span>
    <b class="al">Y</b><span class="fld f2">750.0000</span>
    <b class="al">Z</b><span class="fld f2">795.3500</span>
    <span class="fld f3">mm</span>
    <span class="combo c-deg">Degree<i class="chev"></i></span>
    <span class="combo c-cart">Cart-XY<i class="chev"></i></span>
    <span class="combo c-prob">Prob-On<i class="chev"></i></span>
    <span class="wm">CSDN @山涧果子</span>
  </footer>

  <div class="dialog">
    <div class="dtitle"><span>工件位置找正</span><svg class="dclose" viewBox="0 0 12 12"><path d="M1 1l10 10M11 1 1 11" stroke="#222" stroke-width="1.100"/></svg></div>
    <div class="g g1">
      <div class="namerow"><span class="nlbl">名称</span><span class="dc dcw"><span>坐标系1</span><i class="chev"></i></span></div>
      <div class="g1main">
        <div class="ta">空间旋转 圆柱1 到 ZDIR</div>
        <div class="side">
          <span class="btn dis bw">删除</span>
          <span class="btn bw m5">初始化</span>
          <span class="sidel">调出坐标系</span>
          <span class="dc dcw dcside"><span></span><i class="chev"></i></span>
        </div>
      </div>
    </div>
    <div class="lower">
      <div class="flist">
        <div class="fitem"><span class="ck"></span><span class="fname">圆柱1</span></div>
        <div class="fl"></div><div class="fl"></div><div class="fl"></div><div class="fl"></div><div class="fl"></div><div class="fl"></div><div class="fl"></div><div class="fl"></div>
      </div>
      <div class="rcol">
        <div class="r1">
          <span class="btn b73">自动找正</span>
          <div class="g r1g"><span class="dc dgray"><span>ZDIR</span><i class="chev"></i></span><span class="btn bw focus">空间旋转</span></div>
        </div>
        <div class="g r2">
          <span class="rl">旋转到</span><span class="dc dgray"><span></span><i class="chev"></i></span><span></span>
          <span class="rl">围绕</span><span class="dc dgray"><span></span><i class="chev"></i></span><span class="btn bw">平面旋转</span>
          <span class="rl rl2">角度</span><span class="inp">0</span><span></span>
        </div>
        <div class="g r3">
          <span></span><label class="cl"><span class="ck"></span>X</label><label class="cl"><span class="ck"></span>Y</label><label class="cl"><span class="ck"></span>Z</label><label class="cl"><span class="ck"></span>自动</label>
          <span class="dl">距离</span><span class="inp i35">0</span><span class="inp i35">0</span><span class="inp i35">0</span><span class="btn bw bh22">偏置</span>
        </div>
      </div>
    </div>
    <div class="dfoot">
      <span class="btn b73 dis">CAD!=工件</span><span class="btn b73 ml11">CAD=工件</span><span class="btn b73 ml59">确定</span><span class="btn b73 ml26">取消</span>
    </div>
  </div>
</div>
</body>
</html>
```

FILE: styles.css
```css
*{box-sizing:border-box}
html,body{margin:0;padding:0;height:100%;overflow:hidden}
body{font:12px/1.2 "Liberation Sans","Noto Sans CJK SC",sans-serif;color:#222;background:#f1f4fb}
.defs{position:absolute;width:0;height:0;overflow:hidden}
svg text{font-family:"Liberation Sans","Noto Sans CJK SC",sans-serif}
.app{position:relative;width:1919px;height:1040px;display:flex;flex-direction:column;overflow:hidden}

.titlebar{height:23px;flex:none;background:#fff;display:flex;align-items:center;padding-left:3px}
.applogo{width:17px;height:17px;flex:none}
.title{margin-left:3px;color:#8c8c8c;font-size:12.600px;white-space:nowrap}
.winbtns{margin-left:auto;display:flex}
.winbtn{width:46px;height:20px;display:block}

.menubar{height:37px;flex:none;display:flex;align-items:center;background:#f1f4fb;padding-left:6px}
.grip{flex:none;width:2px;height:22px;margin:0 1px 0 2px;background:repeating-linear-gradient(#8f93a0 0 1px,transparent 1px 3px)}
.gripm{margin-right:2px;height:24px}
.mi{flex:none;padding:0 7.700px;white-space:nowrap;font-size:12px}
.mi:first-of-type{padding-left:6px}
.menuright{margin-left:auto;display:flex;align-items:center;padding-right:8px}
.mtxt{font-size:12px;margin-left:6px;white-space:nowrap}
.mtxt2{margin-left:3px}
.msep{width:1px;height:24px;background:#9aa1ad;margin-left:4px}
.msep2{margin-left:21px}
.msep3{margin-left:6px}
.ml2{margin-left:5px}
.ml8{margin-left:12px}
.pc{margin-left:16px;width:34px;height:34px}
.caret{flex:none;width:6px;height:3px;margin:0 2px;border-left:3px solid transparent;border-right:3px solid transparent;border-top:3px solid #222}
.caretm{margin:0 0 0 3px}

.tbrow{height:36px;flex:none;display:flex;padding-left:4px;background:#f1f4fb}
.band{height:35px;flex:none;display:flex;align-items:center;border-radius:4px 0 0 4px;background:linear-gradient(#f4f6fb,#eceef4 45%,#c8cbd4)}
.handle{width:12px;height:35px;flex:none;border-radius:0 3px 3px 0;background:linear-gradient(#cdd1de,#c4c8d6 60%,#eef0f6);display:flex;flex-direction:column;align-items:center;justify-content:flex-end;padding-bottom:4px}
.handle::before{content:"";width:7px;height:1px;background:#222;margin-bottom:1px}
.handle::after{content:"";border-left:3.500px solid transparent;border-right:3.500px solid transparent;border-top:4px solid #222}
.i{width:32px;height:32px;flex:none;display:block}
.i.n{width:27px}
.i.n2{width:30px}
.i.r{width:31.300px}
.i.t{width:31px}
.i.act{background:linear-gradient(#d5e7f6,#a9d0ea);outline:1px solid #3d7fa8;outline-offset:-1px}
.gap3{margin-left:3px}.gap4{margin-left:4px}.gap5{margin-left:5px}.gap12{margin-left:12px}
.pad1{width:1px;flex:none}
.pad2{width:2px;flex:none}
.sep{flex:none;width:1px;height:26px;background:#9aa0ac;margin:0 3px}
.w1a{width:161px}.w1b{width:232px}.w1c{width:251px}.w1d{width:590px}
.w2a{width:552px}.w2b{width:584px}.w2c{width:456px}
.w3a{width:416px}.w3b{width:327px}.w3c{width:166px}.w3d{width:671px}
.w1d .grip{margin-left:4px}
.w1c .grip{margin-left:3px}
.w2b .grip{margin-left:3px}
.lbl{flex:none;white-space:nowrap}
.l1{margin-left:4px;width:49px}
.l2{margin-left:4px;width:53px}
.numin{flex:none;width:49px;height:22px;border:1px solid #8a8a8a;background:#eceef0;color:#777;font:12px "Liberation Sans",sans-serif;padding:0 3px;margin-right:2px}
.cb{flex:none;display:flex;align-items:center;background:#fff;height:22px;padding-left:3px}
.cbt{flex:1;white-space:nowrap}
.cbbtn{width:12px;height:22px;background:#e4e7ee;display:flex;align-items:center;justify-content:center}
.cbbtn::after{content:"";border-left:3.500px solid transparent;border-right:3.500px solid transparent;border-top:4px solid #111}
.cb1{width:78px}.cb2{width:75px;margin-left:2px}
.red{color:#ec3338}.blue{color:#4f80cc}.yel{color:#a7a60a}
.svgmid{text-anchor:middle}
.svgt{font-size:7px;font-weight:700;fill:#222}
.svgw{font-size:19px;font-weight:700;fill:#222;text-anchor:middle}
.svgr{font-size:26px;font-weight:700;fill:#e01a20;text-anchor:middle}
.svgp{font-size:10px;font-weight:700;fill:#6a3a10}
.svgb{font-size:10px;font-weight:700;fill:#333}
.svgs{font-size:12px;font-weight:700;fill:#222;letter-spacing:-.5px}
.svgq{font-size:15px;font-weight:700;fill:#d01a20}
.svgu{font-size:9px;fill:#222}
.svgtb{font-size:16px;font-weight:700;fill:#3a60b0}
.svgth{font-size:15px;font-style:italic;font-weight:700;fill:#b01a20}
.svgst{font-size:8px;font-weight:700;fill:#fff}
.svgi{font-size:8px;fill:#222}
.svgd{font-size:15px;font-weight:700;fill:#2a6a2a}

.work{flex:1;min-height:0;display:flex;background:#f1f4fb;position:relative}
.left{width:608px;flex:none;display:flex;flex-direction:column;padding-right:4px;background:#eceef4}
.ltool{height:34px;flex:none;display:flex;align-items:center;padding-left:3px;background:linear-gradient(#f5f7fb,#e2e5ec 70%,#d5d8e0)}
.cb3{width:62px;margin-left:1px;height:22px}
.tree{flex:1;background:#c8c8c8;min-height:0}
.row{height:22px;display:flex;border-bottom:1px solid #dedede;align-items:stretch}
.row>span{display:flex;align-items:center;border-right:1px solid #dedede}
.c1{width:21px;flex:none;justify-content:center}
.c2{width:23px;flex:none;justify-content:center}
.c3{width:514px;flex:none;padding-left:6px;white-space:nowrap}
.c4{width:22px;flex:none;justify-content:center}
.c5{width:24px;flex:none;justify-content:center;border-right:0!important}
.sel{background:#6295c8;color:#fff;height:22px}
.bulb{width:20px;height:20px}
.arrow{width:18px;height:12px}
.exp{width:11px;height:11px;border:1px solid #8a98b8;background:#eef2fa;font-size:10px;line-height:8px;text-align:center;margin-right:5px;margin-left:-1px;color:#222}
.rootl{font-size:13.500px}
.conn{align-self:stretch;width:8px;flex:none;margin-right:2px;background:linear-gradient(#222,#222) 0 0/1px 100% no-repeat,linear-gradient(#222,#222) 0 50%/8px 1px no-repeat}
.conn.last{background:linear-gradient(#222,#222) 0 0/1px 50% no-repeat,linear-gradient(#222,#222) 0 50%/8px 1px no-repeat}
.ti{width:20px;height:20px;flex:none;margin-right:2px;margin-left:8px}
.cal{width:16px;height:16px}
.ltabs{height:22px;flex:none;display:flex;border-top:2px solid #a8a8a8;background:#f0f0f0;padding-left:2px;color:#777;align-items:flex-start}
.ltab{padding:1px 5.500px 0;height:19px;white-space:nowrap}
.ltab.on{background:#fff;color:#222;border:1px solid #b0b0b0;border-top:0;border-radius:0 0 4px 4px;padding:1px 5px 0}
.ltab.div{border-left:1px solid #a0a0a0}

.right{width:1305px;flex:none;display:flex;flex-direction:column;border-left:4px solid #5d6876;border-top:2px solid #5d6876}
.ptool{height:36px;flex:none;display:flex;align-items:center;padding-left:4px;background:linear-gradient(#fff,#f2f3f7 50%,#d5d8e0)}
.i.p{width:32px}
.ptool .sep{margin:0 2px}
.ptool .sepw{margin:0 5px}
.pageb{flex:none;width:38px;height:23px;border:1px solid #a8a8a8;margin:0 1px;color:#999;display:flex;align-items:center;justify-content:space-between;padding:0 7px 0 4px;font-size:13px}
.pcar{border-left:4px solid transparent;border-right:4px solid transparent;border-top:4px solid #888}
.cb4{width:70px;margin-left:7px;height:24px}
.cb4 .cbbtn{height:24px;background:#e4e7ee}
.viewport{flex:1;min-height:0;position:relative;background:linear-gradient(#c3c3c3,#e4e2dc 55%,#fdf9ee);border-left:0;overflow:hidden}
.scene{position:absolute;left:0;top:0;width:1301px;height:789px;display:block}
.stripes path{stroke:#d4cc10;stroke-width:3;stroke-opacity:.7;fill:none}
.stripes .faint{stroke-opacity:.2}
.yring{fill:none;stroke:#f6f020;stroke-width:1}
.yring2{stroke:#f6f020;stroke-width:1.300}
.axl{font-size:19px;text-anchor:middle}
.ar{fill:#f0405a}.ab{fill:#3a5ad0}
.tag{font-size:14px;fill:#111;font-family:"Noto Sans CJK SC",sans-serif}
.tri{font-size:20px;text-anchor:middle}
.tg{fill:#138a1e}.tr{fill:#b01020}.tb{fill:#2a64e0}
.scale{position:absolute;left:1230px;top:557px;width:20px;height:171px;display:flex;flex-direction:column;border:1px solid #111;border-top-width:1px}
.scale i{flex:1;display:block;border-bottom:1px solid #111}
.scale i:last-child{border-bottom:0}
.s1{background:#f00}.s2{background:#ff5000}.s3{background:#ffa000}.s4{background:#ff0}.s5{background:#a0ff00}.s6{background:#0f0}.s7{background:#00ffa0}.s8{background:#0ff}.s9{background:#00a0ff}.s10{background:#0050ff}.s11{background:#00f}
.widget{position:absolute;left:1142px;top:721px;width:148px;height:68px}
.wring{position:absolute;left:0;top:0;width:66px;height:66px;border-radius:50%;background:#fff;border:6px solid #6fdc8c;box-shadow:0 0 4px #8fe4a4;display:flex;align-items:baseline;justify-content:center;padding-top:13px;color:#555;font-family:Roboto,sans-serif}
.wnum{font-size:24px;letter-spacing:-1px;font-weight:300}
.wpct{font-size:13px;font-weight:300}
.wpill{position:absolute;left:30px;top:13px;width:117px;height:41px;border-radius:21px;background:#f6f8f9;box-shadow:0 1px 3px #0003;padding:5px 0 0 37px;font-size:9px;color:#222}
.wl1{display:flex;gap:12px}
.warr{color:#2f8fe8;font-weight:700}
.wl2{font-size:10px;margin-top:5px;color:#777}
.wt{color:#2ccf7a}
.wplus{position:absolute;right:7px;top:13px;width:15px;height:15px;border-radius:50%;background:#2f8fe8;color:#fff;font-size:14px;font-weight:700;line-height:14px;text-align:center}
.rtabs{height:22px;flex:none;display:flex;align-items:flex-start;gap:6px;background:linear-gradient(#eef3fc,#c6daf6);border-top:1px solid #6a7a90;padding-left:1px}
.rtab{padding:1px 0 0;white-space:nowrap;height:20px}
.rtab.on{width:36px;background:#eef2f8;border:1px solid #8ea0ba;border-top:0;border-radius:0 0 4px 4px;text-align:center;padding-top:1px}
.blackbar{position:absolute;left:1913px;top:0;width:4px;height:100%;border-left:1px solid #8a93b5;background:linear-gradient(90deg,#eef0f5 0 1px,#111 1px)}

.status{height:21px;flex:none;display:flex;align-items:center;background:#f0f0f0;position:relative;border-top:1px solid #e4e4e4;overflow:hidden;font-size:13px}
.ready{margin-left:3px;width:1280px;font-size:12px}
.sax{width:22px;height:22px;flex:none}
.al{flex:none;width:8px;text-align:center;font-size:13px;margin:0 3px 0 4px}
.ax{margin:0 5px 0 8px}
.fld{flex:none;height:16px;line-height:14px;border:1px solid;border-color:#808080 #fff #fff #808080;text-align:right;padding-right:4px;box-shadow:inset 1px 1px 0 #dcdcdc;font-size:13px;letter-spacing:.3px}
.f1{width:79px}.f2{width:78px}
.f3{width:79px;margin-left:2px}
.combo{flex:none;height:21px;padding:4px 0 0 8px;font-size:15px;position:relative;white-space:nowrap;overflow:visible;line-height:20px}
.c-deg{width:91px}.c-cart{width:79px;border-left:1px solid #aaa;padding-left:7px}.c-prob{width:72px;border-left:1px solid #aaa;padding-left:4px}
.combo .chev{position:absolute;right:6px;top:9px}
.wm{position:absolute;left:1766px;top:-7px;font-size:17px;color:rgba(90,90,90,.55);white-space:nowrap;pointer-events:none}
.chev{display:block;width:7px;height:7px;border-right:1px solid #555;border-bottom:1px solid #555;transform:rotate(45deg) scale(.8);flex:none}

.dialog{position:absolute;left:337px;top:365px;width:421px;height:446px;background:#f0f0f0;border:1px solid #88b0d8;box-shadow:2px 4px 10px rgba(0,0,0,.4);font-size:12px;color:#222}
.dtitle{height:26px;background:#fff;display:flex;align-items:center;justify-content:space-between;padding:0 8px 0 3px}
.dclose{width:12px;height:12px}
.g{border:1px solid #e0e0e0}
.g1{margin:10px 13px 0 11px;height:155px;padding:8px 5px 0 11px}
.namerow{display:flex;align-items:center;height:21px}
.nlbl{width:75px;flex:none}
.dc{display:flex;align-items:center;justify-content:space-between;height:21px;background:#fff;border:1px solid #7a7a7a;padding:0 6px 0 3px;font-size:12px}
.dc .chev{margin-top:-3px}
.dcw{width:117px}
.dcside{width:87px;margin-top:6px}
.dgray{width:71px;background:#e1e1e1;border-color:#adadad;font-size:11px}
.g1main{display:flex;gap:16px;margin-top:8px}
.ta{width:276px;height:114px;background:#fff;border:1px solid #7a7a7a;padding:2px 3px;font-size:11.500px}
.side{width:87px;display:flex;flex-direction:column;padding-top:1px}
.btn{display:flex;align-items:center;justify-content:center;height:21px;background:#e1e1e1;border:1px solid #adadad;white-space:nowrap;flex:none;font-size:12px}
.bw{width:85px;height:22px}
.dis{background:#c2c2c2;color:#8a8a8a;border-color:#c2c2c2}
.m5{margin-top:5px}
.sidel{margin-top:20px;line-height:14px;white-space:nowrap}
.lower{display:flex;gap:12px;margin:10px 0 0 11px}
.flist{width:120px;height:198px;background:#fff;border:1px solid #7a7a7a;padding:0 3px;flex:none}
.fitem{height:41px;border-bottom:1px solid #e8e8e8;display:flex;align-items:flex-end;padding:0 0 0 2px}
.ck{display:block;width:13px;height:13px;background:#fff;border:1px solid #333;flex:none}
.fname{margin-left:34px;line-height:14px}
.fl{height:17px;border-bottom:1px solid #e8e8e8}
.rcol{width:263px;flex:none;display:flex;flex-direction:column;gap:4px;padding-top:5px}
.r1{display:flex;height:36px}
.b73{width:73px;height:22px;margin-left:1px}
.r1 .b73{margin-top:8px;height:21px}
.r1g{margin-left:7px;flex:1;display:flex;align-items:center;padding:2px 0 0 6px;gap:13px}
.focus{border:2px solid #0c74c8;height:22px}
.r2{height:87px;display:grid;grid-template-columns:87px 71px 85px;column-gap:0;grid-auto-rows:21px;row-gap:6.500px;padding-top:6px;align-items:center}
.r2>.btn{margin-left:13px}
.rl{text-align:right;padding-right:13px;white-space:nowrap}
.rl2{padding-right:11px}
.inp{height:20px;background:#fff;border:1px solid #7a7a7a;padding:0 3px;line-height:18px}
.r3{height:60px;display:grid;grid-template-columns:47px 43px 44px 37px 85px;grid-auto-rows:auto;align-content:start;padding-top:9px;align-items:center;row-gap:7px}
.cl{display:flex;align-items:center;gap:3px;line-height:13px;white-space:nowrap}
.dl{padding-left:3px}
.i35{width:35px}
.bh22{height:22px}
.dfoot{display:flex;margin:9px 0 0 11px}
.dfoot .b73{margin-left:0}
.dfoot .ml11{margin-left:11px}
.dfoot .ml59{margin-left:59px}
.dfoot .ml26{margin-left:26px}
```
